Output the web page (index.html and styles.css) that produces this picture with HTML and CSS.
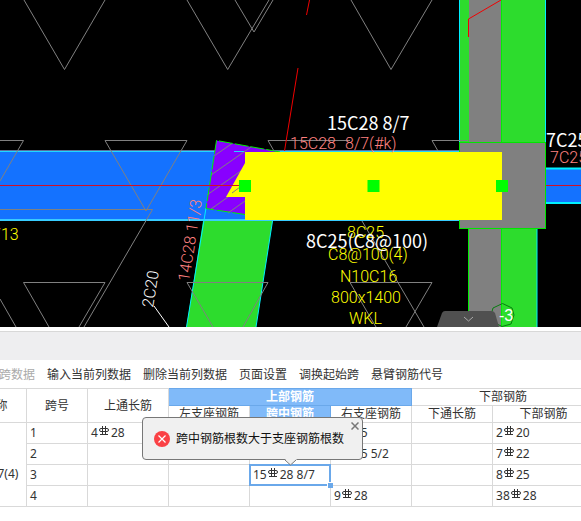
FILE: index.html
```
<!DOCTYPE html>
<html lang="zh-CN">
<head>
<meta charset="utf-8">
<meta name="viewport" content="width=device-width, initial-scale=1">
<title>梁平法表格</title>
<link rel="stylesheet" href="styles.css">
</head>
<body>
<svg width="0" height="0" class="defs" aria-hidden="true">
  <symbol id="rebar" viewBox="0 0 10 12">
    <path d="M3.500 1v9M6.500 1v9M1 9.500h8M2 3.500h6q1.500 0 1.500 1.500v0q0 1.500-1.500 1.500H2Q.5 6.500.5 5v0q0-1.500 1.500-1.500" fill="none" stroke="#333" stroke-width="1"/>
  </symbol>
</svg>
<main class="app">
  <section class="viewport">
    <svg class="drawing" viewBox="0 0 581 327" preserveAspectRatio="xMinYMin slice" role="img" aria-label="梁结构平面图">
      <rect width="581" height="327" fill="#000"/>
      <!-- beams -->
      <rect x="0" y="151" width="246" height="70" class="blue"/>
      <path d="M0 150.500H460" stroke="#5b6f9c"/>
      <path d="M0 151.500H460" stroke="#20d8ff"/>
      <path d="M0 220H246" stroke="#38ccff" stroke-width="2"/>
      <path d="M246 220.500H460" stroke="#38ccff"/>
      <path d="M203 221H272.500L256 327H186.500Z" class="green"/>
      <path d="M206 208L186.500 327M272.500 221L256 327" class="cyan"/>
      <rect x="460" y="0" width="85" height="142" class="green"/>
      <rect x="469" y="0" width="33" height="142" class="grey"/>
      <rect x="469" y="228" width="33" height="99" class="grey"/>
      <rect x="502" y="228" width="35" height="99" class="green"/>
      <path d="M459.500 0V142M545.500 0V142M537 228V327" class="cyan"/>
      <path d="M468.500 228V327M501.500 0V142M501.500 228V327" class="lime"/>
      <rect x="546" y="168" width="35" height="36" class="blue"/>
      <path d="M546 168.500H581M546 203H581" class="cyan" stroke-width="2"/>
      <rect x="459.500" y="142.500" width="86" height="86" fill="#808080" stroke="#00e600"/>
      <!-- slab marks -->
      <g class="mark">
        <path d="M24 0L64.500 69.500L105 0M187 0L227.700 69.500L269 0M235 0L254 32L273 0M351 0L391 69.500L432 0"/>
        <path d="M0 140.500H23.500L0 181M105 140.500H187L146 211ZM350 140.500H268L274 151M468 140.500H432L438 151"/>
        <path d="M0 209.500H152.500L84 327M49 327L23.500 282.500H105L79 327M0 299L16 327"/>
        <path d="M213 327L187 282.500H268L243 327M362 221L424 327M376 327L350 282.500H432L406 327"/>
      </g>
      <path d="M0 185.500H246M546 185.500H581" stroke="#d01028"/>
      <!-- column at the left support -->
      <path d="M216.500 140.500L280 152L245 152V214.500L206 208.500Z" fill="#80f"/>
      <path d="M234 151.500H245" stroke="#20d8ff"/>
      <path d="M214 156L232 143.500M211 175L251 147M207 195L245 168M211 209L245 185M228 213L245 201" class="mark"/>
      <path d="M280 152L216.500 140.500L206 208.500L245 214.500" fill="none" stroke="#00f000" stroke-dasharray="14 2"/>
      <path d="M245 152H502V220H245V197H226L245 163Z" fill="#ff0"/>
      <path d="M232 193L240 187M502.500 152V220" class="mark"/>
      <path d="M200 185.500H240" stroke="#d01028"/>
      <path d="M309.500 0L306.500 15M298 68L284.500 151M501 0L468.500 19V37" fill="none" stroke="#f00000"/>
      <path d="M239 180h12v12h-12ZM367.500 180h12v12h-12ZM496 180h12v12h-12Z" fill="#0f0"/>
      <!-- annotations -->
      <g class="cad pink">
        <text x="290" y="149">15C28</text><text x="345" y="149">8/7(#k)</text>
        <text x="550" y="163">7C25</text>
        <text transform="translate(189 282) rotate(-81)">14C28 11/3</text>
      </g>
      <g class="cad yellow">
        <text x="-8" y="240">713</text>
        <text x="347" y="238">8C25</text>
        <text x="328" y="260">C8@100(4)</text>
        <text x="340" y="282">N10C16</text>
        <text x="331" y="303">800x1400</text>
        <text x="349" y="324">WKL</text>
      </g>
      <text class="cad white" transform="translate(153 308) rotate(-81)">2C20</text>
      <path d="M154 306L169 327" stroke="#fff"/>
      <g class="label white">
        <text x="327" y="130">15C28 8/7</text>
        <text x="306" y="248">8C25(C8@100)</text>
        <text x="546" y="147">7C25</text>
      </g>
      <!-- axis bubble and panel handle -->
      <path d="M502.500 303.500L512 308L514 315L511 324L502 326.500L493 322L491 315L493 308Z" fill="none" stroke="#087d10"/>
      <text x="499" y="321" class="axis white">-3</text>
      <path d="M437 327L442 313Q443 311 445 311H491Q494 311 495 313L499 327Z" fill="#505050"/>
      <path d="M464 317L468.500 321L473 317" fill="none" stroke="#aaa" stroke-width="1"/>
    </svg>
  </section>
  <div class="strip"></div>
  <nav class="toolbar">
    <button type="button" disabled>复制跨数据</button>
    <button type="button">输入当前列数据</button>
    <button type="button">删除当前列数据</button>
    <button type="button">页面设置</button>
    <button type="button">调换起始跨</button>
    <button type="button">悬臂钢筋代号</button>
  </nav>
  <section class="sheet">
    <table>
      <colgroup><col class="name"><col class="span"><col><col><col><col><col><col class="last"></colgroup>
      <thead>
        <tr><th rowspan="2">名称</th><th rowspan="2">跨号</th><th rowspan="2">上通长筋</th><th colspan="3" class="on">上部钢筋</th><th colspan="2">下部钢筋</th></tr>
        <tr><th>左支座钢筋</th><th class="on">跨中钢筋</th><th>右支座钢筋</th><th>下通长筋</th><th>下部钢筋</th></tr>
      </thead>
      <tbody>
        <tr><td rowspan="4" class="beam">WKL7(4)</td><td>1</td><td>4<svg class="bar"><use href="#rebar"/></svg>28</td><td></td><td></td><td>8<svg class="bar"><use href="#rebar"/></svg>25</td><td></td><td>2<svg class="bar"><use href="#rebar"/></svg>20</td></tr>
        <tr><td>2</td><td></td><td></td><td></td><td>8<svg class="bar"><use href="#rebar"/></svg>25 5/2</td><td></td><td>7<svg class="bar"><use href="#rebar"/></svg>22</td></tr>
        <tr><td>3</td><td></td><td></td><td class="current">15<svg class="bar"><use href="#rebar"/></svg>28 8/7</td><td></td><td></td><td>8<svg class="bar"><use href="#rebar"/></svg>25</td></tr>
        <tr><td>4</td><td></td><td></td><td></td><td>9<svg class="bar"><use href="#rebar"/></svg>28</td><td></td><td>38<svg class="bar"><use href="#rebar"/></svg>28</td></tr>
      </tbody>
    </table>
    <div class="tip" role="alert">
      <svg class="error" viewBox="0 0 16 16" aria-hidden="true"><circle cx="8" cy="8" r="8" fill="#fa4145"/><path d="M4.500 4.500l7 7M11.500 4.500l-7 7" stroke="#fff" stroke-width="1.200"/></svg>
      <span>跨中钢筋根数大于支座钢筋根数</span>
      <button type="button" class="close" aria-label="关闭"><svg viewBox="0 0 8 8"><path d="M.5.5l7 7M7.500.5l-7 7" stroke="#777" stroke-width="1.500"/></svg></button>
      <svg class="tail" viewBox="0 0 12 7" aria-hidden="true"><path d="M0 0L6 6L12 0" fill="#f0f0f0"/><path d="M0 1L5.500 6L11 1" fill="none" stroke="#777"/></svg>
    </div>
  </section>
</main>
</body>
</html>
```
FILE: styles.css
```
* { box-sizing: border-box; }
body {
  margin: 0;
  background: #fff;
  color: #333;
  font: 12px/16px "Noto Sans", "Noto Sans CJK SC", sans-serif;
}
button { font: inherit; color: inherit; border: 0; padding: 0; background: none; }
.defs { position: absolute; }
.app { min-height: 100vh; overflow: hidden; }
.drawing { display: block; width: 100%; }

.blue { fill: #1472ff; }
.green { fill: #2ddc2d; }
.grey { fill: #808080; }
.cyan { stroke: #00f0ff; fill: none; }
.lime { stroke: #00f000; }
.mark { stroke: #808080; fill: none; }
.cad { font: 300 16px Roboto, sans-serif; white-space: pre; }
.label { font: 18px "Noto Sans CJK SC", sans-serif; }
.axis { font: 16px "Liberation Sans", sans-serif; }
.pink { fill: #ff8080; }
.yellow { fill: #ff0; }
.white { fill: #fff; }

.strip {
  height: 29px;
  margin-top: 4px;
  background: #eeeef0;
  border-top: 1px solid #d8d8d8;
}
.toolbar {
  display: flex;
  gap: 12px;
  height: 28px;
  padding-top: 2px;
  align-items: center;
  margin-left: -25px;
  white-space: nowrap;
}
.toolbar button:disabled { color: #aaa; }

.sheet { position: relative; }
table {
  width: calc(100% + 50px);
  margin-left: -36px;
  table-layout: fixed;
  border-collapse: collapse;
}
col { width: 81px; }
.name { width: 62px; }
.span { width: 61px; }
.last { width: auto; }
th, td {
  height: 21px;
  padding: 0 3px;
  border: 1px solid #d9d9d9;
  line-height: 16px;
  white-space: nowrap;
}
th { height: 17px; padding: 0; font-weight: 400; text-align: center; }
.on { background: #80baf9; border-color: #6aa8ea; color: #fff; font-weight: 700; }
.beam { padding: 18px 0 0; text-align: center; }
.bar { width: 10px; height: 12px; margin: 0 2px 0 1px; vertical-align: 0; }
.current { position: relative; }
.current::before {
  content: "";
  position: absolute;
  inset: -1px;
  border: 2px solid #6aa8ea;
}
.current::after {
  content: "";
  position: absolute;
  right: -3px;
  bottom: -3px;
  width: 5px;
  height: 5px;
  background: #6aa8ea;
  border: solid #fff;
  border-width: 1px 0 0 1px;
}

.tip {
  position: absolute;
  left: 142px;
  top: 29px;
  display: flex;
  align-items: center;
  gap: 6px;
  height: 43px;
  padding: 0 18px 0 11px;
  background: #f0f0f0;
  border: 1px solid #777;
  border-radius: 4px;
  color: #111;
  white-space: nowrap;
}
.error { width: 16px; height: 16px; }
.close { position: absolute; top: 4px; right: 3px; display: flex; }
.close svg { width: 8px; height: 8px; }
.tail { position: absolute; left: 142px; top: 41px; width: 12px; height: 7px; }
```
